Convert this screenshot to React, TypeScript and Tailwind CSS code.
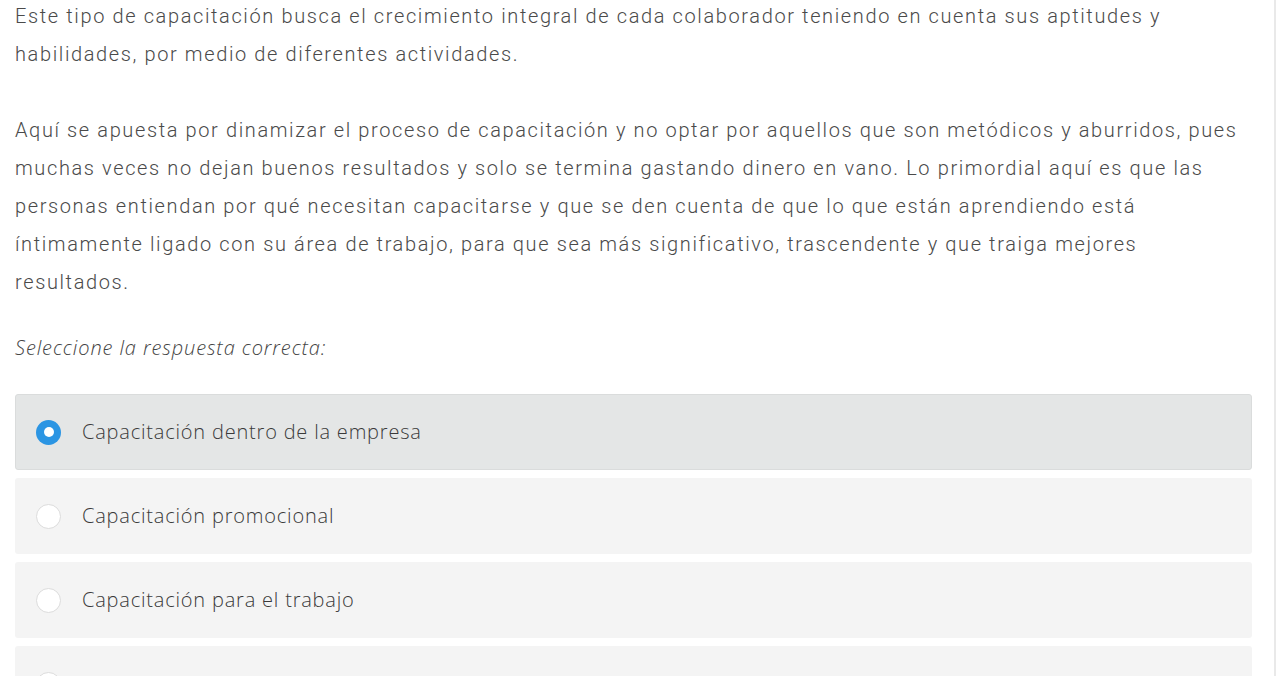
import React from 'react';

const options = [
  'Capacitación dentro de la empresa',
  'Capacitación promocional',
  'Capacitación para el trabajo',
  'Capacitación en el trabajo',
];

const Radio: React.FC<{ checked: boolean }> = ({ checked }) =>
  checked ? (
    <span className="w-[25px] h-[25px] rounded-full bg-[#2b95e3] flex items-center justify-center shrink-0">
      <span className="w-[10px] h-[10px] rounded-full bg-white" />
    </span>
  ) : (
    <span className="w-[25px] h-[25px] rounded-full bg-white border border-[#dcdcdc] shrink-0" />
  );

const App: React.FC = () => {
  const selected = 0;
  return (
    <div className="flex h-[676px] overflow-hidden bg-white">
      <div className="flex-1 pl-[15px] pr-[22px] font-['Roboto',sans-serif] text-[#4a4a4a]">
        <div className="-mt-[3px] text-[20px] leading-[38px] font-light tracking-[1.62px] whitespace-nowrap">
          <p>
            Este tipo de capacitación busca el crecimiento integral de cada colaborador teniendo en cuenta sus aptitudes y
            <br />
            habilidades, por medio de diferentes actividades.
          </p>
          <p className="mt-[38px]">
            Aquí se apuesta por dinamizar el proceso de capacitación y no optar por aquellos que son metódicos y aburridos, pues
            <br />
            muchas veces no dejan buenos resultados y solo se termina gastando dinero en vano. Lo primordial aquí es que las
            <br />
            personas entiendan por qué necesitan capacitarse y que se den cuenta de que lo que están aprendiendo está
            <br />
            íntimamente ligado con su área de trabajo, para que sea más significativo, trascendente y que traiga mejores
            <br />
            resultados.
          </p>
        </div>
        <p className="mt-[33px] font-['Open_Sans',sans-serif] italic font-light text-[20px] tracking-[0.9px] leading-[28px] text-[#444]">
          Seleccione la respuesta correcta:
        </p>
        <div className="mt-[32px] flex flex-col gap-[8px]">
          {options.map((o, i) => (
            <div
              key={o}
              className={
                i === selected
                  ? 'h-[76px] shrink-0 rounded-[3px] bg-[#e4e6e6] border border-[#dadcdc] flex items-center gap-[21px] pl-[20px]'
                  : 'h-[76px] shrink-0 rounded-[3px] bg-[#f4f4f4] flex items-center gap-[21px] pl-[21px]'
              }
            >
              <Radio checked={i === selected} />
              <span className="font-['Open_Sans',sans-serif] text-[20px] tracking-[0.8px] font-light text-[#3a3a3a]">{o}</span>
            </div>
          ))}
        </div>
      </div>
      <div className="w-[2px] bg-[#e9e9e9]" />
      <div className="w-[2px]" />
    </div>
  );
};

export default App;
